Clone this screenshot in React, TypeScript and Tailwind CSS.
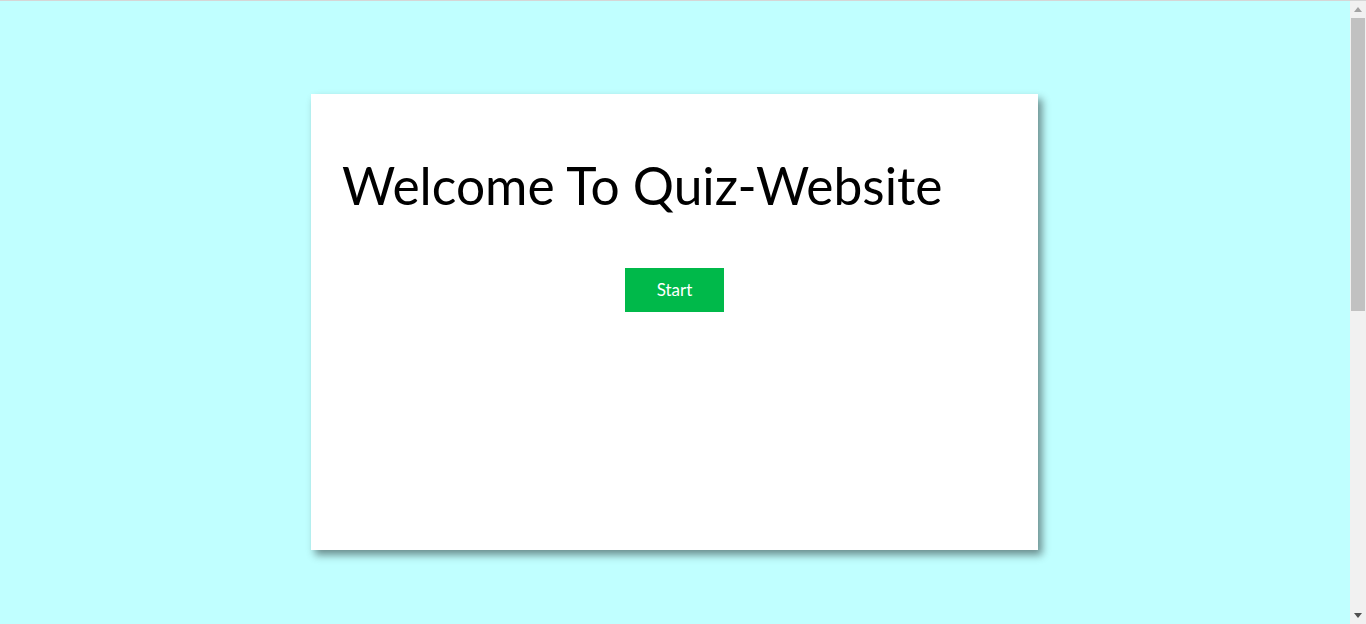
export default function App() {
  return (
    <div className="h-[624px] flex bg-[#c0ffff] border-t border-[#d6d6d6] overflow-hidden">
      <main className="flex-1 pt-[93px] pr-[1px]" style={{ fontFamily: "Lato, 'Open Sans', sans-serif" }}>
        <div className="mx-auto w-[727px] h-[456px] bg-white shadow-[4px_5px_8px_rgba(0,0,0,0.45)] pt-[55px] pl-[31px] pr-[31px]">
          <h1 className="text-[51.5px] leading-[72px] text-black font-normal">Welcome To Quiz-Website</h1>
          <div className="flex justify-center mt-[47px] -ml-[31px] -mr-[31px]">
            <button className="w-[99px] h-[44px] bg-[#00b94a] text-white text-[17px]">Start</button>
          </div>
        </div>
      </main>
      <div className="w-[16px] bg-[#f1f1f1] flex flex-col items-center">
        <div className="h-[17px] w-full flex items-center justify-center">
          <svg width="8" height="5" viewBox="0 0 8 5"><path d="M0 5 L4 0 L8 5 Z" fill="#a3a3a3" /></svg>
        </div>
        <div className="w-[14px] h-[293px] bg-[#c1c1c1]" />
        <div className="flex-1" />
        <div className="h-[17px] w-full flex items-center justify-center">
          <svg width="8" height="5" viewBox="0 0 8 5"><path d="M0 0 L8 0 L4 5 Z" fill="#505050" /></svg>
        </div>
      </div>
    </div>
  );
}
